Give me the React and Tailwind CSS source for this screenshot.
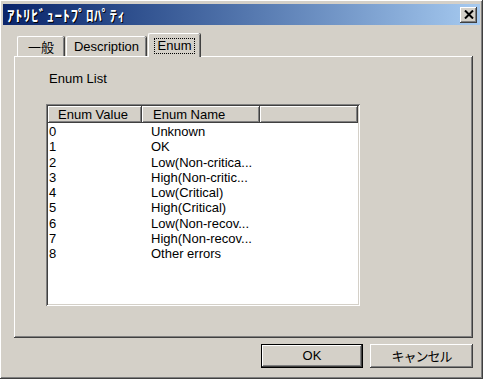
import React from 'react';

const rows = [
  ['0', 'Unknown'],
  ['1', 'OK'],
  ['2', 'Low(Non-critica...'],
  ['3', 'High(Non-critic...'],
  ['4', 'Low(Critical)'],
  ['5', 'High(Critical)'],
  ['6', 'Low(Non-recov...'],
  ['7', 'High(Non-recov...'],
  ['8', 'Other errors'],
];

const raised =
  'shadow-[inset_-1px_-1px_#404040,inset_1px_1px_#ffffff,inset_-2px_-2px_#808080,inset_2px_2px_#d4d0c8]';

function CloseBox() {
  return (
    <div className={`w-[17px] h-[16px] bg-[#d4d0c8] flex items-center justify-center ${raised}`}>
      <svg width="10" height="9" viewBox="0 0 10 9">
        <path d="M1 0.5 L9 8.5 M9 0.5 L1 8.5" stroke="#000" strokeWidth="2" />
      </svg>
    </div>
  );
}

function Tab({ children, w, active }) {
  if (active) {
    return (
      <div
        className={`h-[24px] -mb-[1px] z-10 bg-[#d4d0c8] rounded-t-[2px] border-t border-l border-white shadow-[inset_-1px_0_#808080,1px_0_#404040] flex items-center justify-center ${w}`}
      >
        <span className="border border-dotted border-black px-[3px] leading-[14px]">{children}</span>
      </div>
    );
  }
  return (
    <div
      className={`h-[20px] bg-[#d4d0c8] rounded-t-[2px] border-t border-l border-white shadow-[inset_-1px_0_#808080,1px_0_#404040] flex items-center justify-center ${w}`}
    >
      {children}
    </div>
  );
}

function Button({ children, primary }) {
  if (primary) {
    return (
      <div className="w-[102px] h-[24px] border border-black">
        <div className={`w-full h-full bg-[#d4d0c8] flex items-center justify-center ${raised}`}>{children}</div>
      </div>
    );
  }
  return (
    <div className={`w-[103px] h-[24px] bg-[#d4d0c8] flex items-center justify-center ${raised}`}>{children}</div>
  );
}

export default function App() {
  return (
    <div className="w-[487px] h-[383px] bg-white text-black text-[13px] font-['Liberation_Sans','Noto_Sans_CJK_JP',sans-serif]">
      <div className={`w-[483px] h-[379px] bg-[#d4d0c8] pt-[4px] px-[3px] flex flex-col ${raised}`}>
        {/* Title bar */}
        <div className="h-[21px] flex items-center justify-between bg-linear-to-r from-[#0a246a] to-[#a6caf0]">
          <span className="pl-[4px] text-white font-bold text-[15px] tracking-[0.5px] font-['Noto_Sans_CJK_JP',sans-serif] leading-none [text-shadow:1px_1px_#000]">
            ｱﾄﾘﾋﾞｭｰﾄﾌﾟﾛﾊﾟﾃｨ
          </span>
          <div className="pr-[3px]">
            <CloseBox />
          </div>
        </div>

        <div className="flex flex-col pl-[11px] pr-[7px] mt-[8px]">
          {/* Tabs */}
          <div className="h-[23px] flex items-end pl-[3px] gap-[2px]">
            <Tab w="w-[47px]">
              <span className="font-['Noto_Sans_CJK_JP',sans-serif] text-[13px]">一般</span>
            </Tab>
            <Tab w="w-[80px]">Description</Tab>
            <Tab w="w-[52px]" active>
              Enum
            </Tab>
          </div>

          {/* Panel */}
          <div className={`h-[282px] bg-[#d4d0c8] pt-[15px] pl-[32px] flex flex-col ${raised}`}>
            <div className="pl-[3px] leading-[15px]">Enum List</div>

            {/* List view */}
            <div className="mt-[18px] w-[314px] h-[202px] bg-white shadow-[inset_1px_1px_#808080,inset_-1px_-1px_#ffffff,inset_2px_2px_#404040,inset_-2px_-2px_#d4d0c8] p-[2px] flex flex-col">
              <div className="h-[17px] flex shrink-0">
                <div className={`w-[94px] h-full bg-[#d4d0c8] pl-[10px] leading-[17px] ${raised}`}>Enum Value</div>
                <div className={`w-[118px] h-full bg-[#d4d0c8] pl-[11px] leading-[17px] ${raised}`}>Enum Name</div>
                <div className={`flex-1 h-full bg-[#d4d0c8] ${raised}`} />
              </div>
              <div className="pt-[1px] flex flex-col">
                {rows.map(([v, n]) => (
                  <div key={v} className="h-[15.3px] flex leading-[15px]">
                    <div className="w-[103px] pl-[1px]">{v}</div>
                    <div>{n}</div>
                  </div>
                ))}
              </div>
            </div>
          </div>

          {/* Buttons */}
          <div className="mt-[6px] flex justify-end gap-[7px]">
            <Button primary>OK</Button>
            <Button>
              <span className="font-['Noto_Sans_CJK_JP',sans-serif] text-[13px] tracking-[-1px]">キャンセル</span>
            </Button>
          </div>
        </div>
      </div>
    </div>
  );
}
